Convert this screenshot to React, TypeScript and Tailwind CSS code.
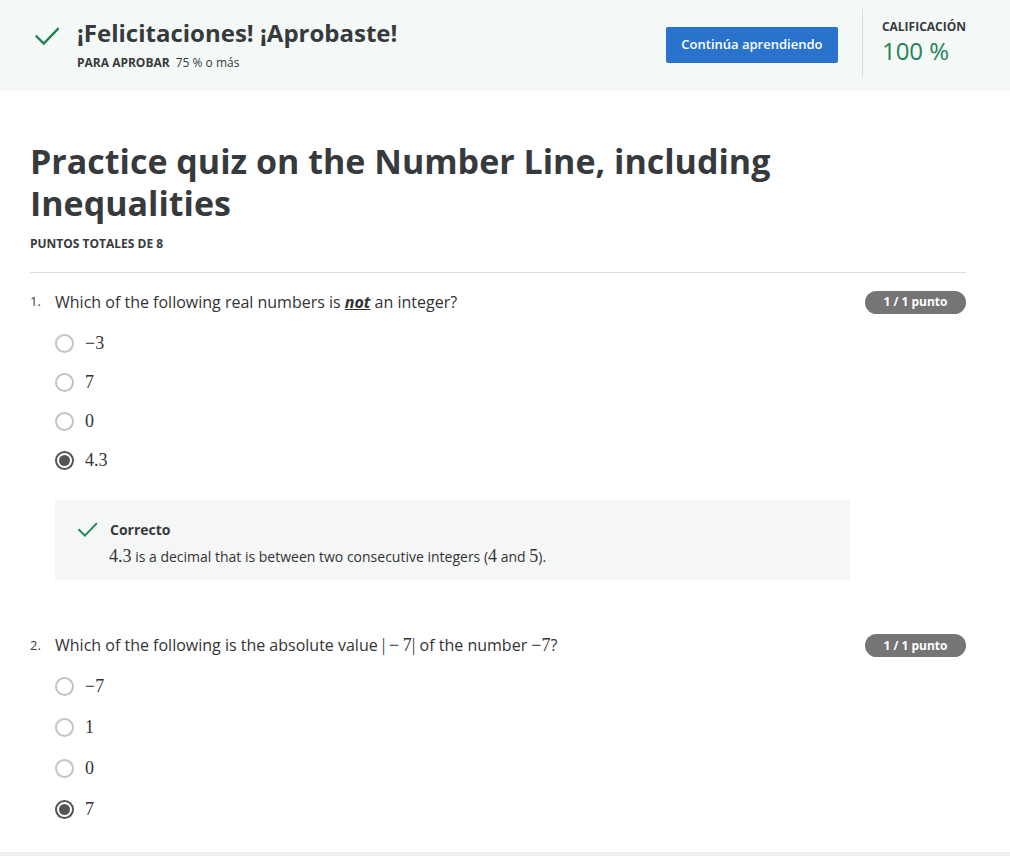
import React from 'react';

const font = { fontFamily: '"Open Sans", "Liberation Sans", sans-serif' };

const Check = ({ className }: { className?: string }) => (
    <svg viewBox="0 0 24 24" className={className} fill="none" stroke="currentColor" strokeWidth={2.2} strokeLinecap="square">
        <path d="M2.5 12.5 L9 19 L22 5.5" />
    </svg>
);

const M = ({ children }: { children: React.ReactNode }) => (
    <span className="font-['Liberation_Serif',serif] text-[18px]">{children}</span>
);

const Radio = ({ checked }: { checked?: boolean }) =>
    checked ? (
        <span className="w-[19px] h-[19px] rounded-full border-2 border-[#555] flex items-center justify-center">
            <span className="w-[11px] h-[11px] rounded-full bg-[#555]" />
        </span>
    ) : (
        <span className="w-[19px] h-[19px] rounded-full border-2 border-[#c4c4c4]" />
    );

const Option = ({ label, checked }: { label: React.ReactNode; checked?: boolean }) => (
    <div className="flex items-center gap-[11px] h-[20px]">
        <Radio checked={checked} />
        <span className="text-[#333] pt-[1px]">
            <M>{label}</M>
        </span>
    </div>
);

const Badge = () => (
    <span className="bg-[#757575] text-white text-[12px] font-bold rounded-full w-[101px] h-[23px] flex items-center justify-center">
        1 / 1 punto
    </span>
);

export default function App() {
    return (
        <div className="w-[1010px] h-[856px] bg-white text-[#373a3c] overflow-hidden flex flex-col" style={font}>
            <header className="bg-[#f4f8f7] h-[91px] flex items-start shrink-0">
                <div className="pl-[34px] pt-[23px] flex">
                    <Check className="w-[26px] h-[26px] text-[#1f8354]" />
                    <div className="ml-[17px] -mt-[7px]">
                        <h1 className="text-[24px] font-bold leading-[34px]">¡Felicitaciones! ¡Aprobaste!</h1>
                        <p className="text-[12px] mt-[4px]">
                            <span className="font-bold">PARA APROBAR</span>
                            <span className="ml-[6px]">75 % o más</span>
                        </p>
                    </div>
                </div>
                <button className="ml-auto mt-[27px] w-[172px] h-[36px] bg-[#2a73cc] text-white text-[13px] font-semibold rounded-[2px]">
                    Continúa aprendiendo
                </button>
                <div className="ml-[24px] mt-[9px] h-[68px] w-px bg-[#dcdcdc]" />
                <div className="ml-[19px] mt-[18px] pr-[44px]">
                    <div className="text-[12px] font-bold leading-[18px]">CALIFICACIÓN</div>
                    <div className="text-[24px] leading-[30px] text-[#1f8354]">100 %</div>
                </div>
            </header>

            <main className="px-[30px] pr-[44px] pt-[49px] flex-1">
                <h2 className="text-[34px] font-bold leading-[42px] pr-[180px]">
                    Practice quiz on the Number Line, including Inequalities
                </h2>
                <p className="text-[12px] font-bold mt-[11px]">PUNTOS TOTALES DE 8</p>
                <hr className="mt-[19px] border-[#dedede]" />

                <section className="mt-[17px]">
                    <div className="flex items-center">
                        <span className="text-[13px] w-[25px]">1.</span>
                        <p className="text-[16px] text-[#333]">
                            Which of the following real numbers is{' '}
                            <em className="font-bold underline">not</em> an integer?
                        </p>
                        <span className="ml-auto">
                            <Badge />
                        </span>
                    </div>
                    <div className="ml-[25px] mt-[19px] flex flex-col gap-[19px]">
                        <Option label="−3" />
                        <Option label="7" />
                        <Option label="0" />
                        <Option label="4.3" checked />
                    </div>
                    <div className="ml-[25px] mt-[30px] w-[795px] h-[80px] bg-[#f5f7f7] pl-[22px] pt-[19px]">
                        <div className="flex items-center gap-[12px]">
                            <Check className="w-[21px] h-[21px] text-[#1f8354]" />
                            <span className="text-[14px] font-bold">Correcto</span>
                        </div>
                        <p className="ml-[32px] mt-[3px] text-[14px] text-[#333]">
                            <M>4.3</M> is a decimal that is between two consecutive integers (<M>4</M> and <M>5</M>).
                        </p>
                    </div>
                </section>

                <section className="mt-[52px]">
                    <div className="flex items-center">
                        <span className="text-[13px] w-[25px]">2.</span>
                        <p className="text-[16px] text-[#333]">
                            Which of the following is the absolute value <M>|&thinsp;−&thinsp;7|</M> of the number <M>−7</M>?
                        </p>
                        <span className="ml-auto">
                            <Badge />
                        </span>
                    </div>
                    <div className="ml-[25px] mt-[17px] flex flex-col gap-[21px]">
                        <Option label="−7" />
                        <Option label="1" />
                        <Option label="0" />
                        <Option label="7" checked />
                    </div>
                </section>
            </main>
            <div className="h-[4px] bg-[#efefef] shrink-0" />
        </div>
    );
}
